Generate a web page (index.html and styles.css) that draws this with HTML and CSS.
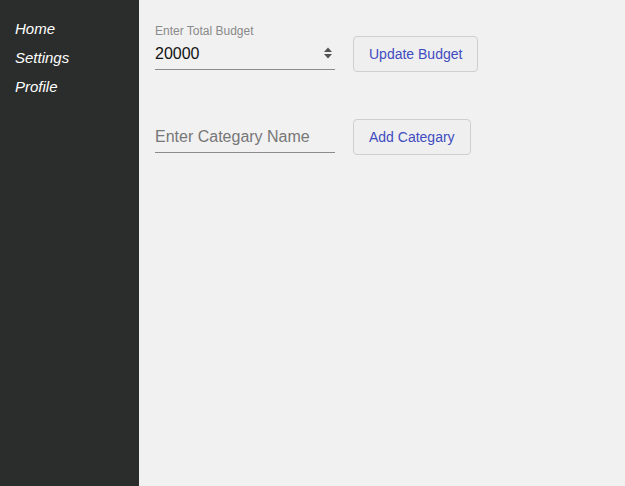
FILE: index.html
```html
<!DOCTYPE html>
<html>
<head>
<meta charset="utf-8">
<link rel="stylesheet" href="styles.css">
</head>
<body>
<div class="app">
  <nav class="sidebar">
    <a class="nav-link" href="#">Home</a>
    <a class="nav-link" href="#">Settings</a>
    <a class="nav-link" href="#">Profile</a>
  </nav>
  <main class="main">
    <div class="row row-budget">
      <div class="field">
        <label class="field-label" for="budget">Enter Total Budget</label>
        <div class="field-box">
          <input id="budget" class="field-input" type="text" value="20000">
          <svg class="spinner" width="10" height="14" viewBox="0 0 10 14"><path d="M1 6 L5 1.5 L9 6 Z M1 8 L5 12.5 L9 8 Z" fill="#555"/></svg>
        </div>
      </div>
      <button class="btn">Update Budget</button>
    </div>
    <div class="row row-category">
      <div class="field">
        <div class="field-box">
          <input class="field-input" type="text" placeholder="Enter Categary Name">
        </div>
      </div>
      <button class="btn">Add Categary</button>
    </div>
  </main>
</div>
</body>
</html>
```
FILE: styles.css
```css
* { box-sizing: border-box; }
html, body { margin: 0; padding: 0; height: 100%; }
body {
  font-family: "Liberation Sans", Arial, sans-serif;
  background: #f1f1f1;
}
.app {
  display: flex;
  height: 486px;
}
.sidebar {
  width: 139px;
  flex: none;
  background: #2b2d2c;
  display: flex;
  flex-direction: column;
  padding: 20px 0 0 15px;
  gap: 12px;
}
.nav-link {
  color: #ffffff;
  font-style: italic;
  font-size: 15px;
  line-height: 17px;
  text-decoration: none;
}
.main {
  flex: 1;
  padding: 24px 0 0 16px;
  display: flex;
  flex-direction: column;
}
.row {
  display: flex;
  align-items: flex-end;
  gap: 18px;
}
.row-category {
  margin-top: 49px;
}
.field {
  width: 180px;
  display: flex;
  flex-direction: column;
}
.field-label {
  font-size: 12px;
  line-height: 14px;
  color: #8a8a8a;
  margin-bottom: 2px;
}
.field-box {
  display: flex;
  align-items: center;
  border-bottom: 1px solid #8c8c8c;
  height: 30px;
  padding-bottom: 3px;
}
.field-input {
  flex: 1;
  min-width: 0;
  border: none;
  background: transparent;
  outline: none;
  padding: 2px 0 0 0;
  font-family: "Liberation Sans", Arial, sans-serif;
  font-size: 16px;
  color: #111;
}
.field-input::placeholder {
  color: #777;
}
.spinner {
  margin-right: 2px;
  flex: none;
}
.btn {
  height: 36px;
  padding: 0 15px;
  border: 1px solid #cfcfcf;
  border-radius: 4px;
  background: #efefef;
  color: #3f4cbf;
  font-family: "Liberation Sans", Arial, sans-serif;
  font-size: 14px;
  margin-bottom: -2px;
}
```
